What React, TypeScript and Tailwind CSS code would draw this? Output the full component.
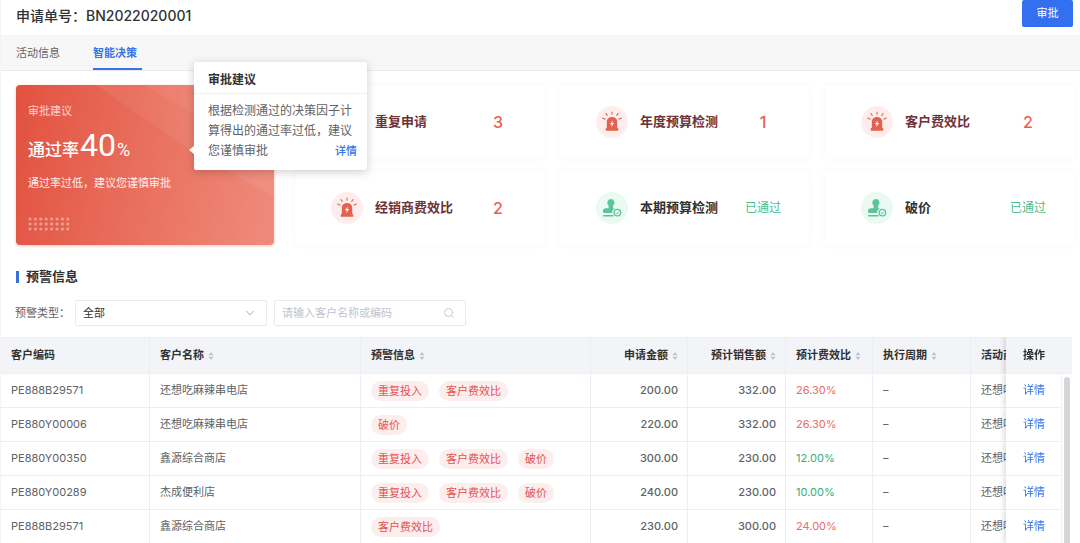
import React from "react";
import { ChevronDown, Search } from "lucide-react";

type Check = { name: string; value: string; passed?: boolean };
type Row = {
  code: string;
  name: string;
  tags: string[];
  amount: string;
  sales: string;
  ratio: string;
  over: boolean;
};

const checks: Check[] = [
  { name: "重复申请", value: "3" },
  { name: "年度预算检测", value: "1" },
  { name: "客户费效比", value: "2" },
  { name: "经销商费效比", value: "2" },
  { name: "本期预算检测", value: "已通过", passed: true },
  { name: "破价", value: "已通过", passed: true },
];

const rows: Row[] = [
  { code: "PE888B29571", name: "还想吃麻辣串电店", tags: ["重复投入", "客户费效比"], amount: "200.00", sales: "332.00", ratio: "26.30%", over: true },
  { code: "PE880Y00006", name: "还想吃麻辣串电店", tags: ["破价"], amount: "220.00", sales: "332.00", ratio: "26.30%", over: true },
  { code: "PE880Y00350", name: "鑫源综合商店", tags: ["重复投入", "客户费效比", "破价"], amount: "300.00", sales: "230.00", ratio: "12.00%", over: false },
  { code: "PE880Y00289", name: "杰成便利店", tags: ["重复投入", "客户费效比", "破价"], amount: "240.00", sales: "230.00", ratio: "10.00%", over: false },
  { code: "PE888B29571", name: "鑫源综合商店", tags: ["客户费效比"], amount: "230.00", sales: "300.00", ratio: "24.00%", over: true },
];

function AlarmIcon() {
  return (
    <svg viewBox="0 0 32 32" className="size-8 shrink-0" aria-hidden="true">
      <circle cx="16" cy="16" r="16" fill="#fdeeed" />
      <path d="M10.8 22.5v-7a5.2 4.6 0 0 1 10.4 0v7z" fill="#e4604f" />
      <rect x="9.8" y="22" width="12.4" height="2.8" rx="0.6" fill="#e4604f" />
      <path d="M16.8 14.2l-2.8 4h1.8l-.6 3 2.9-4.1h-1.9z" fill="#fff" />
      <path
        d="M6.6 12l2.4 1.1M10 7.5l1.2 1.9M16 6v2.2M22 7.5l-1.2 1.9M25.4 12l-2.4 1.1"
        stroke="#e4705f"
        strokeWidth="1.2"
        strokeLinecap="round"
        fill="none"
      />
    </svg>
  );
}

function StampIcon() {
  return (
    <svg viewBox="0 0 32 32" className="size-8 shrink-0" aria-hidden="true">
      <circle cx="16" cy="16" r="16" fill="#ebf9f3" />
      <path
        d="M14.8 7a3.6 3.6 0 0 1 2.3 6.4v2.8h1.9a5.2 5.2 0 0 0-2.9 4.8H8a1 1 0 0 1-1-1v-1.2c0-1.5 1.1-2.6 2.8-2.6h2.8v-2.8A3.6 3.6 0 0 1 14.8 7z"
        fill="#5cc49c"
      />
      <path d="M7.6 23.8h9.4" stroke="#5cc49c" strokeWidth="1.4" strokeLinecap="round" />
      <circle cx="21.4" cy="20.6" r="3.3" fill="#ebf9f3" stroke="#5cc49c" strokeWidth="1.3" />
      <path d="M19.9 20.6l1.2 1.2 1.9-2.1" stroke="#5cc49c" strokeWidth="1" fill="none" />
    </svg>
  );
}

function SortIcon() {
  return (
    <svg viewBox="0 0 6 10" className="h-[10px] w-[6px]" aria-hidden="true">
      <path d="M3 1l2.6 3.2H.4zM3 9l2.6-3.2H.4z" fill="#c0c4cc" />
    </svg>
  );
}

function CardTexture() {
  return (
    <svg viewBox="0 0 258 160" preserveAspectRatio="none" className="absolute inset-0 size-full rounded" aria-hidden="true">
      <path d="M80 0H258V112L176 66z" fill="#fff" opacity="0.06" />
      <path d="M128 0H258V75z" fill="#fff" opacity="0.05" />
    </svg>
  );
}

function Dots() {
  return (
    <svg viewBox="0 0 42 14" className="mt-6 h-[14px] w-[42px]" aria-hidden="true">
      {[0, 1, 2].map((r) =>
        Array.from({ length: 8 }, (_, c) => (
          <circle key={r * 8 + c} cx={2 + c * 5.4} cy={2 + r * 5} r="1.6" fill="#fff" opacity="0.4" />
        ))
      )}
    </svg>
  );
}

function Suggestion() {
  return (
    <section className="relative w-[258px] shrink-0 rounded bg-linear-100 from-[#e2513f] to-[#ef8b7c] shadow-[0_1px_3px_rgba(226,81,63,0.35)]">
      <CardTexture />
      <div className="relative px-3 pt-4 text-white">
        <h2 className="text-[11px] leading-5 text-white/75">审批建议</h2>
        <p className="mt-1 flex h-10 items-baseline leading-10">
          <span className="text-[17px] font-medium">通过率</span>
          <span className="ml-px font-['Roboto',sans-serif] text-[32px]">40</span>
          <span className="ml-px font-['Roboto',sans-serif] text-[18px]">%</span>
        </p>
        <p className="mt-2 text-[11px] leading-5 text-white/90">通过率过低，建议您谨慎审批</p>
        <Dots />
      </div>
      <div
        role="tooltip"
        className="absolute -top-[23px] left-[178px] z-10 h-[108px] w-[173px] rounded-xs bg-white shadow-[0_2px_10px_rgba(0,0,0,0.2)]"
      >
        <svg viewBox="0 0 5 8" className="absolute top-[84px] -left-[5px] h-2 w-[5px]" aria-hidden="true">
          <path d="M5 0v8L0 4z" fill="#fff" />
        </svg>
        <h3 className="border-b border-[#f0f1f4] px-[14px] pt-2 pb-[3px] text-[12px] leading-5 font-bold text-[#303133]">审批建议</h3>
        <div className="pt-[7px] pr-[10px] pl-[14px] text-[12px] leading-5 text-[#606266]">
          <p>根据检测通过的决策因子计算得出的通过率过低，建议</p>
          <div className="flex justify-between">
            <span>您谨慎审批</span>
            <a href="#advice" className="text-[11px] font-medium text-[#2f73e8]">详情</a>
          </div>
        </div>
      </div>
    </section>
  );
}

function CheckCard({ item }: { item: Check }) {
  return (
    <div className="flex h-[74px] items-center rounded bg-white pr-4 pl-9 shadow-[0_0_7px_rgba(0,0,0,0.04)]">
      {item.passed ? <StampIcon /> : <AlarmIcon />}
      <span className={`ml-3 flex-1 text-[13px] font-bold whitespace-nowrap ${item.passed ? "text-[#303133]" : "text-[#6b3338]"}`}>
        {item.name}
      </span>
      <span className={`w-[60px] text-center ${item.passed ? "text-[12px] text-[#4dbb8e]" : "text-[16px] font-medium text-[#e8604f]"}`}>
        {item.value}
      </span>
    </div>
  );
}

const cell = "border-r border-b border-[#ebeef5] pl-[10px] pr-[9px]";
const pinned =
  "sticky right-0 border-b border-[#ebeef5] pl-[17px] shadow-[-2px_0_5px_rgba(0,0,0,0.14)] [clip-path:inset(0_0_0_-8px)]";

function Head({ label, sort = true, right = false }: { label: string; sort?: boolean; right?: boolean }) {
  return (
    <th scope="col" className={`${cell} overflow-hidden border-t bg-[#f3f4f7]`}>
      <div className={`flex items-center gap-1 whitespace-nowrap ${right ? "justify-end" : ""}`}>
        {label}
        {sort && <SortIcon />}
      </div>
    </th>
  );
}

export default function App() {
  return (
    <main className="min-h-screen overflow-hidden border-l border-[#f3f4f6] bg-white font-['Inter','Noto_Sans_CJK_SC',sans-serif] text-[11px] text-[#606266]">
      <header className="flex h-[35px] items-start justify-between pr-[7px] pl-[15px]">
        <h1 className="pt-[5px] text-[14px] leading-[22px] font-medium text-[#303133]">申请单号：BN2022020001</h1>
        <button type="button" className="h-[27px] w-[51px] rounded-xs bg-[#3370f0] text-[11px] text-white">审批</button>
      </header>

      <nav className="flex h-9 gap-7 border-b border-[#e9eaec] bg-[#f7f7f8] pl-[15px]">
        <a href="#info" className="flex w-[49px] items-center border-b-2 border-transparent pt-1">活动信息</a>
        <a href="#decision" aria-current="page" className="flex w-[49px] items-center border-b-2 border-[#3a72e8] pt-1 font-bold text-[#3a72e8]">
          智能决策
        </a>
      </nav>

      <div className="flex gap-[21px] pt-[14px] pr-[6px] pl-[15px]">
        <Suggestion />
        <div className="grid flex-1 grid-cols-3 gap-x-4 gap-y-3">
          {checks.map((item) => (
            <CheckCard key={item.name} item={item} />
          ))}
        </div>
      </div>

      <section>
        <h2 className="mt-[22px] flex h-5 items-center gap-[7px] pl-[15px] text-[13px] font-bold text-[#303133]">
          <span className="h-3 w-[3px] bg-[#3a6fe0]" />
          预警信息
        </h2>
        <form className="mt-[13px] flex h-[26px] items-center pl-[14px]">
          <label htmlFor="type" className="w-[60px] whitespace-nowrap">预警类型：</label>
          <div className="relative h-[26px] w-[192px]">
            <select id="type" className="size-full appearance-none rounded-xs border border-[#e8eaef] bg-white pl-[7px] text-[11px] text-[#303133]">
              <option>全部</option>
            </select>
            <ChevronDown className="pointer-events-none absolute top-[6px] right-[10px] size-[14px] text-[#b4b8c0]" strokeWidth={1.8} />
          </div>
          <div className="relative ml-[7px] h-[26px] w-[192px]">
            <input
              aria-label="搜索客户"
              placeholder="请输入客户名称或编码"
              className="size-full rounded-xs border border-[#e8eaef] pl-[7px] text-[11px] placeholder:text-[#c0c4cc]"
            />
            <Search className="pointer-events-none absolute top-[7px] right-[11px] size-3 text-[#c0c4cc]" strokeWidth={1.8} />
          </div>
        </form>

        <div className="relative mt-[11px] mr-2">
          <div className="overflow-x-auto [scrollbar-width:none]">
            <table className="w-full min-w-[1156px] table-fixed border-separate border-spacing-0 text-left">
              <colgroup>
                <col className="w-[149px]" />
                <col className="w-[211px]" />
                <col className="w-[230px]" />
                <col className="w-[97px]" />
                <col className="w-[98px]" />
                <col className="w-[87px]" />
                <col className="w-[98px]" />
                <col className="w-[120px]" />
                <col className="w-[66px]" />
              </colgroup>
              <thead>
                <tr className="h-[37px] font-bold text-[#303133]">
                  <Head label="客户编码" sort={false} />
                  <Head label="客户名称" />
                  <Head label="预警信息" />
                  <Head label="申请金额" right />
                  <Head label="预计销售额" right />
                  <Head label="预计费效比" />
                  <Head label="执行周期" />
                  <Head label="活动商" sort={false} />
                  <th scope="col" className={`${pinned} border-t bg-[#f3f4f7]`}>操作</th>
                </tr>
              </thead>
              <tbody>
                {rows.map((row, i) => (
                  <tr key={i} className="h-[34px]">
                    <td className={cell}>{row.code}</td>
                    <td className={cell}>{row.name}</td>
                    <td className={cell}>
                      <div className="flex gap-[10px]">
                        {row.tags.map((tag) => (
                          <span key={tag} className="h-5 rounded-full bg-[#fdeeee] px-[7px] leading-5 text-[#e8504f]">
                            {tag}
                          </span>
                        ))}
                      </div>
                    </td>
                    <td className={`${cell} text-right font-medium`}>{row.amount}</td>
                    <td className={`${cell} text-right font-medium`}>{row.sales}</td>
                    <td className={`${cell} ${row.over ? "text-[#ee6a63]" : "text-[#36ad76]"}`}>{row.ratio}</td>
                    <td className={cell}>–</td>
                    <td className={cell}>还想吃</td>
                    <td className={`${pinned} bg-white`}>
                      <a href="#detail" className="text-[#2f73e8]">详情</a>
                    </td>
                  </tr>
                ))}
              </tbody>
            </table>
          </div>
          <div className="absolute top-[37px] right-0 bottom-0 w-[11px] border-l border-[#f0f1f4] bg-white px-[2px] pt-[3px]">
            <div className="h-full w-[6px] rounded-t-full bg-[#d3d5d9]" />
          </div>
        </div>
      </section>
    </main>
  );
}
